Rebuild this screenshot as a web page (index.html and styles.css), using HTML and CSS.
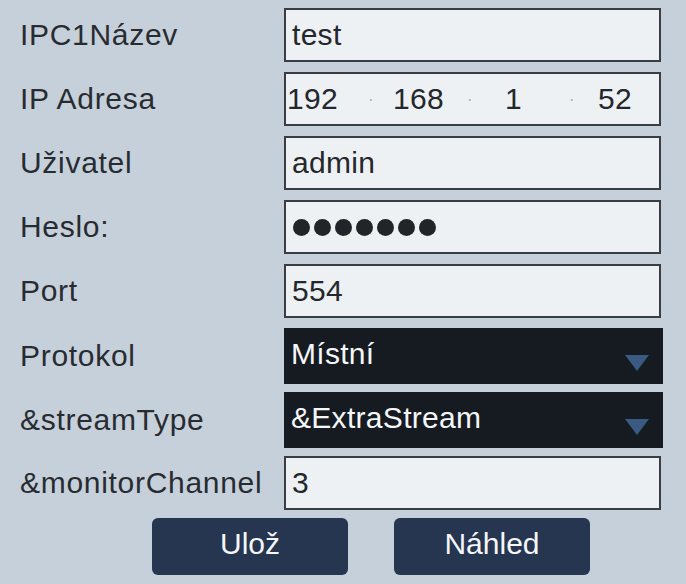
FILE: index.html
```html
<!DOCTYPE html>
<html lang="cs">
  <head>
    <meta charset="UTF-8" />
    <title>IPC1</title>
    <link rel="stylesheet" href="styles.css">
  </head>
  <body>
    <div class="form">
      <div class="row">
        <label>IPC1Název</label>
        <div class="field">test</div>
      </div>
      <div class="row">
        <label>IP Adresa</label>
        <div class="field ip">
          <span class="seg s1">192</span><span class="dot">·</span>
          <span class="seg s2">168</span><span class="dot">·</span>
          <span class="seg s3">1</span><span class="dot">·</span>
          <span class="seg s4">52</span>
        </div>
      </div>
      <div class="row">
        <label>Uživatel</label>
        <div class="field">admin</div>
      </div>
      <div class="row">
        <label>Heslo:</label>
        <div class="field pwd">
          <i></i><i></i><i></i><i></i><i></i><i></i><i></i>
        </div>
      </div>
      <div class="row">
        <label>Port</label>
        <div class="field">554</div>
      </div>
      <div class="row">
        <label>Protokol</label>
        <div class="select">Místní<span class="arrow"></span></div>
      </div>
      <div class="row">
        <label>&amp;streamType</label>
        <div class="select">&amp;ExtraStream<span class="arrow"></span></div>
      </div>
      <div class="row">
        <label>&amp;monitorChannel</label>
        <div class="field">3</div>
      </div>
      <div class="buttons">
        <button class="btn">Ulož</button>
        <button class="btn">Náhled</button>
      </div>
    </div>
  </body>
</html>
```

FILE: styles.css
```css
body {
  margin: 0;
  background-color: #c6d0da;
  font-family: "Liberation Sans", Arial, sans-serif;
  color: #282c31;
}
.form {
  padding: 8px 0 0 20px;
}
.row {
  display: grid;
  grid-template-columns: 264px 377px;
  align-items: center;
  height: 54px;
  margin-bottom: 10px;
}
label {
  font-size: 30px;
  white-space: nowrap;
  letter-spacing: 0.7px;
}
.field {
  box-sizing: border-box;
  height: 54px;
  background-color: #eef1f3;
  border: 2px solid #3a3e44;
  padding-left: 6px;
  font-size: 30px;
  line-height: 50px;
  color: #24272c;
  letter-spacing: 0.3px;
}
.ip {
  display: flex;
  padding-left: 1px;
}
.seg {
  display: inline-block;
}
.s1 { width: 78px; }
.s2 { width: 71px; margin-left: 16px; }
.s3 { width: 61px; margin-left: 29px; }
.s4 { margin-left: 20px; }
.dot {
  color: #9dbbd4;
  font-size: 18px;
  width: 12px;
  text-align: center;
}
.pwd {
  display: flex;
  align-items: center;
  gap: 4px;
  padding-left: 7px;
}
.pwd i {
  width: 17px;
  height: 17px;
  border-radius: 50%;
  background-color: #212428;
}
.select {
  position: relative;
  box-sizing: border-box;
  width: 379px;
  height: 56px;
  background-color: #161b22;
  color: #f4f6f8;
  font-size: 30px;
  line-height: 52px;
  padding-left: 7px;
  letter-spacing: 0.3px;
}
.arrow {
  position: absolute;
  right: 14px;
  top: 27px;
  width: 0;
  height: 0;
  border-left: 12px solid transparent;
  border-right: 12px solid transparent;
  border-top: 16px solid #3b5a82;
}
.buttons {
  display: flex;
  gap: 46px;
  margin: -2px 0 0 132px;
}
.btn {
  width: 196px;
  height: 57px;
  border: none;
  border-radius: 6px;
  background-color: #263550;
  color: #f4f6f8;
  font-family: "Liberation Sans", Arial, sans-serif;
  font-size: 30px;
  padding: 0 0 6px 0;
}
```
